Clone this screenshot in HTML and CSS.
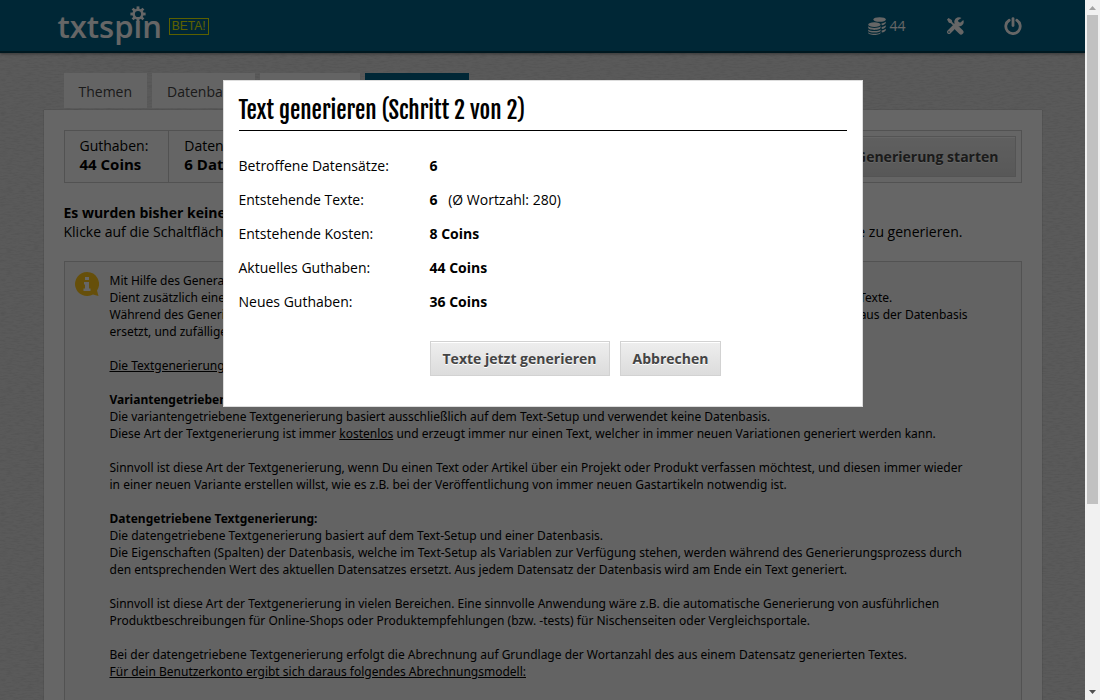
FILE: index.html
```html
<!DOCTYPE html>
<html lang="de">
<head>
    <meta charset="UTF-8">
    <meta name="viewport" content="width=device-width, initial-scale=1.0">
    <title>txtspin - Text generieren</title>
    <link rel="stylesheet" href="styles.css">
</head>
<body>
    <div class="viewport">
        <header class="header">
            <div class="header-inner">
                <a class="logo" href="#">
                    <span class="logo-text">txtspin</span>
                    <svg class="logo-gear" viewBox="0 0 16 16" width="16" height="16" aria-hidden="true">
                        <circle cx="8" cy="8" r="7" fill="#006287"/>
                        <g fill="#fff">
                            <circle cx="8" cy="8" r="5.6"/>
                            <rect x="6.6" y="0.4" width="2.8" height="15.2"/>
                            <rect x="6.6" y="0.4" width="2.8" height="15.2" transform="rotate(45 8 8)"/>
                            <rect x="6.6" y="0.4" width="2.8" height="15.2" transform="rotate(90 8 8)"/>
                            <rect x="6.6" y="0.4" width="2.8" height="15.2" transform="rotate(135 8 8)"/>
                        </g>
                        <circle cx="8" cy="8" r="3.1" fill="#006287"/>
                    </svg>
                </a>
                <span class="beta">BETA!</span>
                <nav class="header-nav">
                    <a href="#" class="coins">
                        <svg viewBox="0 0 18 18" width="18" height="18" fill="currentColor" aria-hidden="true">
                            <ellipse cx="11.6" cy="2.5" rx="6.2" ry="2.3"/>
                            <path d="M13.4 6.4c2-.2 3.6-.8 4.4-1.7v1.1c0 1.2-1.8 2.2-4 2.5z"/>
                            <path d="M13.6 10c2-.2 3.4-.8 4.2-1.7v1.1c0 1.2-1.7 2.2-4 2.5z"/>
                            <path d="M13.6 13.5c2-.2 3.4-.8 4.2-1.7v1.1c0 1.2-1.7 2.2-4 2.5z"/>
                            <ellipse cx="6.4" cy="7.6" rx="6.2" ry="2.3"/>
                            <path d="M.2 9.3c1.1 1 3.4 1.6 6.2 1.6s5.1-.6 6.2-1.6v1.3c0 1.4-2.800 2.400-6.200 2.400S.2 12 .2 10.600z"/>
                            <path d="M.2 12.400c1.100 1 3.400 1.600 6.200 1.600s5.100-.6 6.200-1.600v1c0 1.300-2.800 2.200-6.200 2.200S.2 14.700.2 13.400z"/>
                            <path d="M.2 15.200c1.100 1 3.400 1.500 6.200 1.500s5.100-.5 6.200-1.500v.5c0 1.300-2.800 2.200-6.200 2.200S.2 17 .2 15.700z"/>
                        </svg>
                        <span>44</span>
                    </a>
                    <a href="#" aria-label="Einstellungen">
                        <svg viewBox="0 0 18 18" width="18" height="18" aria-hidden="true">
                            <path d="M3 15L11.5 6.5" stroke="currentColor" stroke-width="4" stroke-linecap="round"/>
                            <path d="M15.5.9A4.7 4.7 0 1 0 17.3 3L14.5 5.6l-2.1-.3-.3-2z" fill="currentColor"/>
                            <path d="M1 2.5L2.5 1l3.3 1.9.4 2L11 9.7 9.7 11 4.9 6.2l-2-.4z" fill="currentColor"/>
                            <path d="M11.4 11.4l3.6 3.6" stroke="currentColor" stroke-width="5" stroke-linecap="round"/>
                            <circle cx="3" cy="15" r="0.8" fill="#006287"/>
                        </svg>
                    </a>
                    <a href="#" aria-label="Abmelden">
                        <svg viewBox="0 0 18 18" width="18" height="18" fill="none" stroke="currentColor" stroke-width="2.8" stroke-linecap="round" aria-hidden="true">
                            <path d="M9 1.6v7"/>
                            <path d="M5.2 3.3a7.2 7.2 0 1 0 7.6 0"/>
                        </svg>
                    </a>
                </nav>
            </div>
        </header>

        <div class="container">
            <nav class="tabs">
                <a href="#">Themen</a>
                <a href="#">Datenbasis</a>
                <a href="#">Text-Setup</a>
                <a href="#" class="active">Generieren</a>
            </nav>
            <main class="content">
                <div class="status">
                    <div class="status-cell">Guthaben:<br><b>44 Coins</b></div>
                    <div class="status-cell">Datenbasis:<br><b>6 Datensätze</b></div>
                    <button type="button" class="button button-start">Generierung starten</button>
                </div>
                <p class="intro">
                    <b>Es wurden bisher keine Texte generiert.</b><br>
                    Klicke auf die Schaltfläche "Generierung starten", um mit Hilfe des Text-Setups und der Datenbasis automatisch neue Texte zu generieren.
                </p>
                <div class="info">
                    <svg class="info-icon" viewBox="0 0 24 24" width="24" height="24" aria-hidden="true">
                        <path d="M12 0a12 12 0 1 0 6 22.4L23.5 24 22 18.6A12 12 0 0 0 12 0z" fill="#ffc61a"/>
                        <path d="M10 5h4v3h-4zM9 10h5v6.5h1.5V19h-7v-2.5H10v-4H9z" fill="#fff"/>
                    </svg>
                    <div class="info-text">
                        <p>
                            Mit Hilfe des Generators werden aus Deinem Text-Setup fertige Texte erzeugt.<br>
                            Dient zusätzlich eine Datenbasis als Grundlage, entstehen für alle dort vorhandenen Datensätze jeweils ganz eigene und individuelle Texte.<br>
                            Während des Generierungsprozesses werden die Variablen im Text-Setup durch die entsprechenden Werte der einzelnen Datensätze aus der Datenbasis ersetzt, und zufällige Varianten gewählt.
                        </p>
                        <p><a href="#">Die Textgenerierung im Überblick</a></p>
                        <p>
                            <b>Variantengetriebene Textgenerierung:</b><br>
                            Die variantengetriebene Textgenerierung basiert ausschließlich auf dem Text-Setup und verwendet keine Datenbasis.<br>
                            Diese Art der Textgenerierung ist immer <u>kostenlos</u> und erzeugt immer nur einen Text, welcher in immer neuen Variationen generiert werden kann.
                        </p>
                        <p>Sinnvoll ist diese Art der Textgenerierung, wenn Du einen Text oder Artikel über ein Projekt oder Produkt verfassen möchtest, und diesen immer wieder in einer neuen Variante erstellen willst, wie es z.B. bei der Veröffentlichung von immer neuen Gastartikeln notwendig ist.</p>
                        <p>
                            <b>Datengetriebene Textgenerierung:</b><br>
                            Die datengetriebene Textgenerierung basiert auf dem Text-Setup und einer Datenbasis.<br>
                            Die Eigenschaften (Spalten) der Datenbasis, welche im Text-Setup als Variablen zur Verfügung stehen, werden während des Generierungsprozess durch den entsprechenden Wert des aktuellen Datensatzes ersetzt. Aus jedem Datensatz der Datenbasis wird am Ende ein Text generiert.
                        </p>
                        <p>Sinnvoll ist diese Art der Textgenerierung in vielen Bereichen. Eine sinnvolle Anwendung wäre z.B. die automatische Generierung von ausführlichen Produktbeschreibungen für Online-Shops oder Produktempfehlungen (bzw. -tests) für Nischenseiten oder Vergleichsportale.</p>
                        <p>
                            Bei der datengetriebene Textgenerierung erfolgt die Abrechnung auf Grundlage der Wortanzahl des aus einem Datensatz generierten Textes.<br>
                            <u>Für dein Benutzerkonto ergibt sich daraus folgendes Abrechnungsmodell:</u>
                        </p>
                    </div>
                </div>
            </main>
        </div>

        <div class="overlay">
            <div class="modal" role="dialog" aria-labelledby="modal-title">
                <h1 id="modal-title">Text generieren (Schritt 2 von 2)</h1>
                <dl class="summary">
                    <dt>Betroffene Datensätze:</dt>
                    <dd><b>6</b></dd>
                    <dt>Entstehende Texte:</dt>
                    <dd><b>6</b> <span class="words">(Ø Wortzahl: 280)</span></dd>
                    <dt>Entstehende Kosten:</dt>
                    <dd><b>8 Coins</b></dd>
                    <dt>Aktuelles Guthaben:</dt>
                    <dd><b>44 Coins</b></dd>
                    <dt>Neues Guthaben:</dt>
                    <dd><b>36 Coins</b></dd>
                </dl>
                <div class="modal-buttons">
                    <button type="button" class="button">Texte jetzt generieren</button>
                    <button type="button" class="button">Abbrechen</button>
                </div>
            </div>
        </div>
    </div>

    <div class="scrollbar" aria-hidden="true">
        <svg viewBox="0 0 15 15" width="15" height="15"><path d="M4 10l3.5-4L11 10z" fill="#a3a3a3"/></svg>
        <div class="scrollbar-track"><div class="scrollbar-thumb"></div></div>
        <svg viewBox="0 0 15 15" width="15" height="15"><path d="M4 5l3.5 4L11 5z" fill="#505050"/></svg>
    </div>
</body>
</html>
```
FILE: styles.css
```css
* {
    box-sizing: border-box;
}
body {
    display: flex;
    height: 100vh;
    margin: 0;
    overflow: hidden;
    font-family: "Open Sans", sans-serif;
    font-size: 14px;
    line-height: 19px;
    color: #000;
}
a {
    color: inherit;
}
.viewport {
    position: relative;
    flex: 1;
    min-width: 0;
    overflow: hidden;
    background-color: #e2e2e2;
    background-image: url("data:image/svg+xml,%3Csvg xmlns='http://www.w3.org/2000/svg' width='200' height='200'%3E%3Cfilter id='n'%3E%3CfeTurbulence type='fractalNoise' baseFrequency='.15 .7' numOctaves='3' stitchTiles='stitch'/%3E%3CfeColorMatrix values='0 0 0 0 0 0 0 0 0 0 0 0 0 0 0 .14 0 0 0 -.05'/%3E%3C/filter%3E%3Crect width='200' height='200' filter='url(%23n)'/%3E%3C/svg%3E");
}

/* header */
.header {
    background: #006287;
    border-bottom: 2px solid #003c50;
    box-shadow: 0 1px 3px rgba(0, 0, 0, 0.4);
}
.header-inner {
    display: flex;
    align-items: center;
    max-width: 998px;
    height: 51px;
    margin: 0 auto;
    padding: 0 20px 0 14px;
    color: #fff;
}
.header-inner a {
    text-decoration: none;
}
.logo {
    position: relative;
}
.logo-text {
    font-size: 31px;
    font-weight: 600;
    line-height: 48px;
}
.logo-gear {
    position: absolute;
    top: 4px;
    right: 16px;
}
.beta {
    margin: 2px 0 0 7px;
    padding: 0 2px;
    border: 1px solid #e4f000;
    color: #e4f000;
    font: 12px/15px "Liberation Sans", Arial, sans-serif;
}
.header-nav {
    display: flex;
    gap: 40px;
    margin-left: auto;
    color: #fff;
}
.header-nav a {
    display: flex;
    align-items: center;
}
.coins {
    gap: 3px;
}

/* tabs and page content */
.container {
    max-width: 998px;
    margin: 0 auto;
    padding-top: 20px;
}
.tabs {
    display: flex;
    gap: 5px;
    margin: 0 20px 2px;
}
.tabs a {
    padding: 9px 15px 7px;
    background: #fafafa;
    color: #444;
    text-decoration: none;
}
.tabs .active {
    background: #006287;
    color: #fff;
}
.content {
    padding: 20px;
    background: #fff;
    box-shadow: 0 0 1px rgba(0, 0, 0, 0.4);
}
.status {
    display: flex;
    border: 1px solid #ccc;
    background: #fcfcfc;
}
.status-cell {
    padding: 5px 20px 8px 15px;
    border-right: 1px solid #ccc;
}
.status-cell b {
    font-size: 15px;
}
.intro {
    margin: 20px 0;
}
.info {
    display: flex;
    gap: 11px;
    padding: 10px 45px 10px 10px;
    border: 1px solid #ccc;
    background: #f7f7f7;
    font-family: "Noto Sans", "Open Sans", sans-serif;
    font-size: 12px;
    line-height: 17px;
}
.info-icon {
    flex: none;
}
.info-text p {
    margin: 0 0 17px;
}

.button {
    padding: 7px 12px;
    border: 1px solid #d2d2d2;
    background: linear-gradient(#eee, #dcdcdc);
    box-shadow: inset 0 1px 0 #fff;
    color: #444;
    font: bold 14px/19px "Open Sans", sans-serif;
    text-shadow: 0 1px 0 #fff;
    cursor: pointer;
}
.button:hover {
    background: #e4e4e4;
}
.button-start {
    margin: 5px 5px 5px auto;
    padding: 7px 16px;
}

/* dialog */
.overlay {
    position: absolute;
    inset: 0;
    padding: 80px 20px;
    background: rgba(0, 0, 0, 0.6);
}
.modal {
    max-width: 640px;
    margin: 0 auto;
    padding: 15px 15px 30px;
    border: 1px solid #ddd;
    background: #fff;
}
.modal h1 {
    margin: 0 0 25px;
    padding-bottom: 4px;
    border-bottom: 1px solid #000;
    font: 23px/30px "Fjalla One", "Liberation Sans Narrow", sans-serif;
}
.summary {
    display: grid;
    grid-template-columns: 191px 1fr;
    row-gap: 15px;
    margin: 0;
}
.summary dd {
    margin: 0;
}
.words {
    margin-left: 7px;
}
.modal-buttons {
    display: flex;
    gap: 10px;
    margin: 30px 0 0 191px;
}

/* scrollbar */
.scrollbar {
    display: flex;
    flex-direction: column;
    width: 15px;
    background: #f1f1f1;
}
.scrollbar-track {
    flex: 1;
    padding: 0 2px;
}
.scrollbar-thumb {
    height: 73%;
    background: #c1c1c1;
}
```
